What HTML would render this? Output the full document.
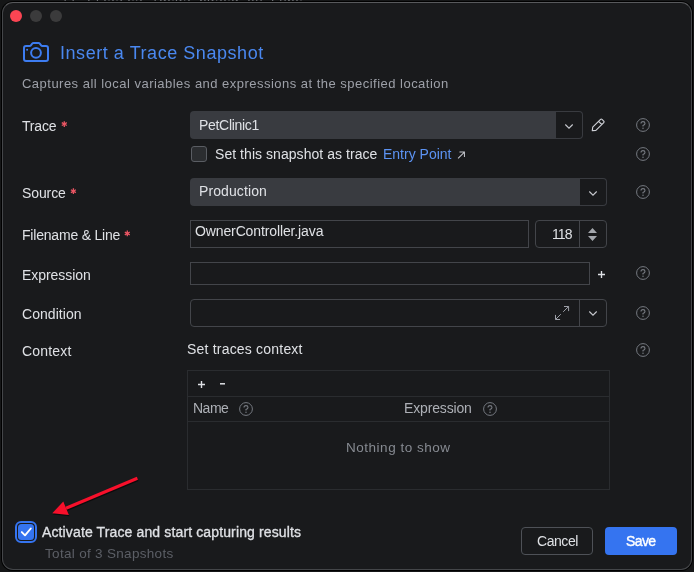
<!DOCTYPE html>
<html>
<head>
<meta charset="utf-8">
<style>
html,body{margin:0;padding:0;}
body{width:694px;height:572px;background:#151617;overflow:hidden;position:relative;font-family:"Liberation Sans",sans-serif;font-size:14px;color:#dfe1e5;}
.abs{position:absolute;}
#win{position:absolute;left:2px;top:2px;width:690px;height:568px;background:#191a1c;border:1px solid #444649;border-top-color:#58595c;border-radius:11px;box-sizing:border-box;box-shadow:0 0 0 1px #000;}
.t{position:absolute;white-space:nowrap;line-height:16px;letter-spacing:0.2px;will-change:transform;}
.lbl{color:#dfe1e5;font-size:14px;}
.req{position:absolute;will-change:transform;color:#e0515a;font-size:17px;line-height:16px;letter-spacing:0;}
.combo{position:absolute;background:#393b40;border-radius:4px;box-sizing:border-box;}
.inp{position:absolute;border:1px solid #43454a;border-radius:0;box-sizing:border-box;background:#191a1c;}
svg{position:absolute;overflow:visible;}
</style>
</head>
<body>
<div class="t" style="left:63px;top:-9px;font-size:13px;color:#6e7074;font-family:'Liberation Mono',monospace;">// Freezes ideas based on Enbe</div>
<div id="win"></div>

<!-- traffic lights -->
<div class="abs" style="left:10px;top:10px;width:12px;height:12px;border-radius:50%;background:#fb4553;"></div>
<div class="abs" style="left:30px;top:10px;width:12px;height:12px;border-radius:50%;background:#3b3b3c;"></div>
<div class="abs" style="left:50px;top:10px;width:12px;height:12px;border-radius:50%;background:#3b3b3c;"></div>

<!-- camera icon -->
<svg style="left:0;top:0;" width="60" height="70" viewBox="0 0 60 70">
<path d="M26 46 H29.6 Q30.4 46 30.9 45.3 L32.2 43.6 Q32.7 43 33.5 43 H38.5 Q39.3 43 39.8 43.6 L41.1 45.3 Q41.6 46 42.4 46 H46 Q48 46 48 48 V59 Q48 61 46 61 H26 Q24 61 24 59 V48 Q24 46 26 46 Z" fill="none" stroke="#3d7cf0" stroke-width="2" stroke-linejoin="round"/>
<circle cx="36" cy="52.8" r="4.9" fill="none" stroke="#3d7cf0" stroke-width="2"/>
<circle cx="27.1" cy="49.8" r="1" fill="#3d7cf0"/>
</svg>
<div class="t" id="title" style="left:59.5px;top:42px;font-size:18px;line-height:22px;color:#4a88f0;letter-spacing:0.55px;">Insert a Trace Snapshot</div>
<div class="t" id="sub" style="left:22px;top:76px;font-size:13px;color:#9da0a8;letter-spacing:0.48px;">Captures all local variables and expressions at the specified location</div>

<!-- asterisks -->
<svg style="left:0;top:0;" width="200" height="300" viewBox="0 0 200 300"><path d="M64.30 121.20 L64.30 127.00 M61.79 122.65 L66.81 125.55 M66.81 122.65 L61.79 125.55 M73.40 188.30 L73.40 194.10 M70.89 189.75 L75.91 192.65 M75.91 189.75 L70.89 192.65 M127.30 230.50 L127.30 236.30 M124.79 231.95 L129.81 234.85 M129.81 231.95 L124.79 234.85" fill="none" stroke="#ea5563" stroke-width="1.3"/></svg>
<!-- Trace row -->
<div class="t lbl" id="l1" style="left:22px;top:118px;letter-spacing:-0.2px;">Trace</div>
<div class="combo" style="left:190px;top:111px;width:393px;height:28px;"></div>
<div class="abs" style="left:556px;top:112px;width:26px;height:26px;background:#191a1c;border-radius:0 3px 3px 0;"></div>
<div class="t" id="v1" style="left:199px;top:117px;letter-spacing:-0.3px;">PetClinic1</div>
<svg style="left:565px;top:123.5px;" width="8" height="5" viewBox="0 0 8 5"><path d="M0.3 0.5 L4 4.2 L7.7 0.5" fill="none" stroke="#c8cad0" stroke-width="1.1"/></svg>
<!-- pencil -->
<svg style="left:0;top:0;" width="694" height="572" viewBox="0 0 694 572">
<path d="M592.300 130.600 L592.700 127.200 L600.550 119.350 Q601.250 118.650 601.950 119.350 L603.750 121.150 Q604.450 121.850 603.750 122.550 L595.900 130.400 Z M598.600 121.300 L601.800 124.500" fill="none" stroke="#ced0d6" stroke-width="1.15" stroke-linejoin="round"/>
</svg>

<!-- checkbox row -->
<div class="abs" style="left:191px;top:146px;width:16px;height:16px;box-sizing:border-box;border:1px solid #5a5d63;border-radius:3px;background:#2b2d30;"></div>
<div class="t" id="c1" style="left:215px;top:146px;letter-spacing:0.05px;">Set this snapshot as trace</div>
<div class="t" id="c2" style="left:383px;top:146px;letter-spacing:0px;color:#5c93f3;">Entry Point</div>
<svg style="left:457.3px;top:150.6px;" width="8.5" height="8.5" viewBox="0 0 8 8"><path d="M1 7 L7 1 M2.3 1 H7 V5.7" fill="none" stroke="#c4c6cc" stroke-width="0.95"/></svg>

<!-- Source row -->
<div class="t lbl" id="l2" style="left:22px;top:185px;letter-spacing:-0.1px;">Source</div>
<div class="combo" style="left:190px;top:178px;width:417px;height:28px;"></div>
<div class="abs" style="left:580px;top:179px;width:26px;height:26px;background:#191a1c;border-radius:0 3px 3px 0;"></div>
<div class="t" id="v2" style="left:199px;top:183px;letter-spacing:0.1px;">Production</div>
<svg style="left:589px;top:190.7px;" width="8" height="5" viewBox="0 0 8 5"><path d="M0.3 0.5 L4 4.2 L7.7 0.5" fill="none" stroke="#c8cad0" stroke-width="1.1"/></svg>

<!-- Filename row -->
<div class="t lbl" id="l3" style="left:22px;top:227px;letter-spacing:-0.2px;">Filename &amp; Line</div>
<div class="inp" style="left:190px;top:220px;width:339px;height:28px;"></div>
<div class="t" id="v3" style="left:195px;top:223px;letter-spacing:-0.12px;">OwnerController.java</div>
<div class="inp" style="left:535px;top:220px;width:72px;height:28px;border-radius:4px;"></div>
<div class="abs" style="left:579px;top:221px;width:1px;height:26px;background:#43454a;"></div>
<div class="t" id="v4" style="left:552px;top:226px;letter-spacing:-0.9px;">118</div>
<svg style="left:588px;top:228px;" width="9" height="13" viewBox="0 0 9 13"><path d="M0 5 L4.5 0 L9 5 Z M0 8 L4.5 13 L9 8 Z" fill="#a4a7ad"/></svg>

<!-- Expression row -->
<div class="t lbl" id="l4" style="left:22px;top:267px;letter-spacing:-0.05px;">Expression</div>
<div class="inp" style="left:190px;top:262px;width:400px;height:23px;"></div>
<svg style="left:598px;top:270.8px;" width="7" height="7" viewBox="0 0 7 7"><path d="M3.5 0 V7 M0 3.5 H7" fill="none" stroke="#dfe1e5" stroke-width="1.35"/></svg>

<!-- Condition row -->
<div class="t lbl" id="l5" style="left:22px;top:306px;letter-spacing:0.05px;">Condition</div>
<div class="inp" style="left:190px;top:299px;width:417px;height:28px;border-radius:4px;"></div>
<div class="abs" style="left:579px;top:300px;width:1px;height:26px;background:#43454a;"></div>
<svg style="left:0;top:0;" width="694" height="572" viewBox="0 0 694 572"><path d="M563.200 311.800 L568.600 306.500 M564 306.500 H568.600 V311.100 M560.800 314.200 L555.500 319.500 M555.500 314.900 V319.500 H560.100" fill="none" stroke="#9da0a8" stroke-width="1"/></svg>
<svg style="left:589px;top:311px;" width="8" height="5" viewBox="0 0 8 5"><path d="M0.3 0.5 L4 4.2 L7.7 0.5" fill="none" stroke="#c8cad0" stroke-width="1.1"/></svg>

<!-- Context row -->
<div class="t lbl" id="l6" style="left:22px;top:343px;">Context</div>
<div class="t" id="c3" style="left:187px;top:341px;">Set traces context</div>

<!-- table -->
<div class="abs" style="left:187px;top:370px;width:423px;height:120px;box-sizing:border-box;border:1px solid #2a2c2f;"></div>
<div class="abs" style="left:188px;top:396px;width:421px;height:1px;background:#2a2c2f;"></div>
<div class="abs" style="left:188px;top:421px;width:421px;height:1px;background:#2a2c2f;"></div>
<svg style="left:198px;top:380.5px;" width="7" height="7" viewBox="0 0 7 7"><path d="M3.5 0 V7 M0 3.5 H7" fill="none" stroke="#dfe1e5" stroke-width="1.4"/></svg>
<svg style="left:219.5px;top:383.3px;" width="5" height="2" viewBox="0 0 5 2"><path d="M0 0.8 H5" fill="none" stroke="#dfe1e5" stroke-width="1.5"/></svg>
<div class="t" id="h1" style="left:193px;top:400px;color:#adb0b6;letter-spacing:-0.5px;">Name</div>
<div class="t" id="h2" style="left:404px;top:400px;color:#adb0b6;letter-spacing:-0.15px;">Expression</div>
<div class="t" id="n1" style="left:346px;top:440px;font-size:13.5px;color:#868a91;letter-spacing:0.52px;">Nothing to show</div>

<!-- help icons -->
<svg width="0" height="0" style="left:0;top:0;"><defs>
<g id="q"><circle cx="7" cy="7" r="6.4" fill="none" stroke="#767a81" stroke-width="1"/><path d="M5 5.6 Q5 3.6 7 3.6 Q9 3.6 9 5.4 Q9 6.6 7 7.4 V8.4" fill="none" stroke="#767a81" stroke-width="1.1"/><circle cx="7" cy="10.3" r="0.75" fill="#767a81"/></g>
</defs></svg>
<svg style="left:239px;top:402px;" width="14" height="14" viewBox="0 0 14 14"><use href="#q"/></svg>
<svg style="left:483px;top:402px;" width="14" height="14" viewBox="0 0 14 14"><use href="#q"/></svg>
<svg style="left:636px;top:118px;" width="14" height="14" viewBox="0 0 14 14"><use href="#q"/></svg>
<svg style="left:636px;top:147px;" width="14" height="14" viewBox="0 0 14 14"><use href="#q"/></svg>
<svg style="left:636px;top:185px;" width="14" height="14" viewBox="0 0 14 14"><use href="#q"/></svg>
<svg style="left:636px;top:266px;" width="14" height="14" viewBox="0 0 14 14"><use href="#q"/></svg>
<svg style="left:636px;top:306px;" width="14" height="14" viewBox="0 0 14 14"><use href="#q"/></svg>
<svg style="left:636px;top:343px;" width="14" height="14" viewBox="0 0 14 14"><use href="#q"/></svg>

<!-- red arrow -->
<svg style="left:0;top:0;" width="694" height="572" viewBox="0 0 694 572">
<g transform="translate(0.5,1.2)" opacity="0.55">
<path d="M137.4 478.300 L66 508.200" stroke="#000" stroke-width="3.4" fill="none"/>
<path d="M52.400 513.200 L63.400 501.600 L68.900 515 Z" fill="#000"/>
</g>
<path d="M137.4 478.300 L66 508.200" stroke="#f7102b" stroke-width="3.1" stroke-linecap="butt" fill="none"/>
<path d="M52.300 513.200 L63.300 501.500 L68.900 515.100 Z" fill="#f7102b"/>
</svg>

<!-- bottom checkbox -->
<div class="abs" style="left:15px;top:521px;width:22px;height:22px;box-sizing:border-box;border:2px solid #3574f0;border-radius:6px;"></div>
<div class="abs" style="left:17.75px;top:523.75px;width:16.5px;height:16.5px;border-radius:3.5px;background:#3574f0;"></div>
<svg style="left:0;top:0;" width="60" height="572" viewBox="0 0 60 572"><path d="M21.800 532.100 L25 535.300 L30.800 528.500" fill="none" stroke="#fff" stroke-width="1.9" stroke-linecap="round" stroke-linejoin="round"/></svg>
<div class="t" id="a1" style="left:41.6px;top:524px;letter-spacing:0.13px;-webkit-text-stroke:0.3px #dfe1e5;">Activate Trace and start capturing results</div>
<div class="t" id="a2" style="left:45px;top:546px;font-size:13.5px;color:#5c5f66;letter-spacing:0.31px;">Total of 3 Snapshots</div>

<!-- buttons -->
<div class="abs" style="left:521px;top:527px;width:72px;height:28px;box-sizing:border-box;border:1px solid #4e5157;border-radius:4px;"></div>
<div class="t" id="b1" style="left:536.5px;top:533px;letter-spacing:-0.45px;">Cancel</div>
<div class="abs" style="left:605px;top:527px;width:72px;height:28px;border-radius:4px;background:#3574f0;"></div>
<div class="t" id="b2" style="left:626px;top:533px;color:#fff;letter-spacing:-0.6px;-webkit-text-stroke:0.4px #fff;">Save</div>

</body>
</html>
